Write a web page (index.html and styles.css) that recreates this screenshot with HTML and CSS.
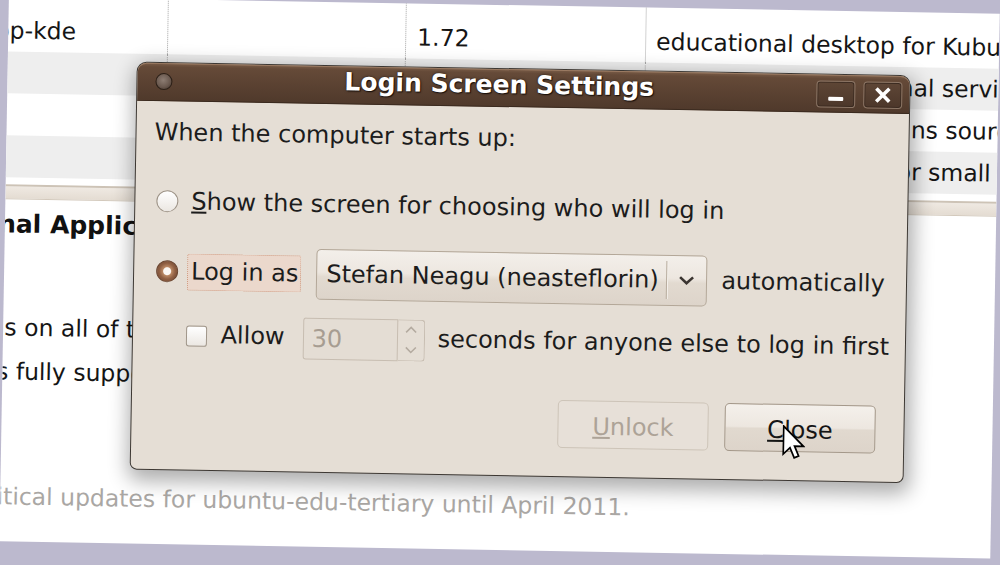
FILE: index.html
```html
<!DOCTYPE html>
<html>
<head>
<meta charset="utf-8">
<title>Login Screen Settings</title>
<link rel="stylesheet" href="styles.css">
</head>
<body>
<div class="stage">
  <div class="page">
    <div class="table">
      <div class="row first">
        <div class="cell c1 cut">edubuntu-desktop-kde</div>
        <div class="cell c2"></div>
        <div class="cell c3">1.72</div>
        <div class="cell c4">educational desktop for Kubuntu</div>
      </div>
      <div class="row alt">
        <div class="cell c1"></div>
        <div class="cell c2"></div>
        <div class="cell c3"></div>
        <div class="cell c4">best tools for additional services</div>
      </div>
      <div class="row">
        <div class="cell c1"></div>
        <div class="cell c2"></div>
        <div class="cell c3"></div>
        <div class="cell c4">a package that contains source code</div>
      </div>
      <div class="row alt">
        <div class="cell c1"></div>
        <div class="cell c2"></div>
        <div class="cell c3"></div>
        <div class="cell c4">Edubuntu desktops for small children</div>
      </div>
    </div>
    <div class="divider"></div>
    <h2 class="heading">Educational Applications</h2>
    <p class="line l1">Applications on all of the supported systems</p>
    <p class="line l2">This package is fully supported by Canonical</p>
    <p class="note">Canonical provides critical updates for ubuntu-edu-tertiary until April 2011.</p>

    <div class="dialog">
      <div class="titlebar">
        <span class="menu-dot"></span>
        <span class="title">Login Screen Settings</span>
        <div class="wm-buttons">
          <span class="wm-btn"><svg width="37" height="25" viewBox="0 0 37 25"><rect x="11" y="15" width="15" height="4" rx="1" fill="#ffffff"/></svg></span>
          <span class="wm-btn"><svg width="37" height="25" viewBox="0 0 37 25"><path d="M12 6 L25 19 M25 6 L12 19" stroke="#ffffff" stroke-width="3.6" fill="none"/></svg></span>
        </div>
      </div>
      <div class="body">
        <div class="prompt">When the computer starts up:</div>
        <div class="opt opt1">
          <span class="radio"></span>
          <span class="lbl show"><u>S</u>how the screen for choosing who will log in</span>
        </div>
        <div class="opt opt2">
          <span class="radio on"></span>
          <span class="focus">Log in as</span>
          <div class="combo">
            <span class="combo-text">Stefan Neagu (neasteflorin)</span>
            <span class="combo-sep"></span>
            <span class="combo-arrow"><svg width="17" height="10" viewBox="0 0 17 10"><path d="M2 2 L8.5 8 L15 2" fill="none" stroke="#3b3531" stroke-width="2.6"/></svg></span>
          </div>
          <span class="lbl auto">automatically</span>
        </div>
        <div class="opt opt3">
          <span class="check"></span>
          <span class="lbl allow">Allow</span>
          <div class="spin">
            <span class="spin-val">30</span>
            <span class="spin-arrows">
              <svg width="14" height="9" viewBox="0 0 14 9"><path d="M2 7 L7 2 L12 7" fill="none" stroke="#b4aba0" stroke-width="1.6"/></svg>
              <svg width="14" height="9" viewBox="0 0 14 9"><path d="M2 2 L7 7 L12 2" fill="none" stroke="#b4aba0" stroke-width="1.6"/></svg>
            </span>
          </div>
          <span class="lbl secs">seconds for anyone else to log in first</span>
        </div>
        <div class="actions">
          <button class="btn dis"><u>U</u>nlock</button>
          <button class="btn"><u>C</u>lose</button>
        </div>
      </div>
      <svg class="cursor" width="23" height="35" viewBox="0 0 13 20"><path d="M0.6 0.6 L0.6 16.6 L4.4 12.9 L6.9 18.7 L9.4 17.6 L7 12 L12.1 12 Z" fill="#ffffff" stroke="#000000" stroke-width="1" stroke-linejoin="miter"/></svg>
    </div>
  </div>
</div>
</body>
</html>
```

FILE: styles.css
```css
html, body {
  margin: 0;
  padding: 0;
  overflow: hidden;
  background: #bcb9ce;
}

.stage {
  width: 1000px;
  height: 565px;
  box-sizing: border-box;
  padding: 5px 0 0 4px;
  transform: rotate(1deg);
  transform-origin: 500px 282px;
  font-family: "DejaVu Sans", "Liberation Sans", sans-serif;
}

.page {
  position: relative;
  width: 991px;
  height: 545px;
  background: #ffffff;
  overflow: hidden;
  color: #151515;
  font-size: 23.5px;
}

/* background table */
.row {
  display: flex;
  height: 42px;
  line-height: 42px;
}
.row.first {
  padding-top: 13px;
  height: 42px;
}
.row.alt {
  background: #eeeeee;
}
.cell {
  box-sizing: border-box;
  white-space: nowrap;
  overflow: hidden;
}
.c1 { width: 159px; }
.c2 { width: 238px; border-left: 1px dotted #a4a4a4; }
.c3 { width: 240px; border-left: 1px dotted #a4a4a4; padding-left: 11px; }
.c4 { flex: 1; border-left: 1px dotted #a4a4a4; padding-left: 10px; }
.row.first .cell { margin-top: -13px; padding-top: 13px; height: 55px; }
.cut { text-indent: -199px; }

.divider {
  margin-top: 7px;
  height: 15px;
  box-sizing: border-box;
  border-top: 2px solid #cdc3b6;
  border-bottom: 1px solid #d3c9bc;
  background: linear-gradient(#efe9e2, #e4dcd2);
}

.heading {
  margin: 10px 0 0;
  font-size: 25px;
  font-weight: bold;
  line-height: 30px;
  white-space: nowrap;
  overflow: hidden;
  text-indent: -129px;
  color: #111111;
}

.line {
  margin: 0;
  line-height: 44px;
  white-space: nowrap;
  overflow: hidden;
}
.l1 { margin-top: 66px; text-indent: -130px; }
.l2 { text-indent: -175px; }

.note {
  margin: 88px 0 0;
  line-height: 30px;
  white-space: nowrap;
  overflow: hidden;
  text-indent: -257px;
  color: #aaa7a4;
}

/* dialog window */
.dialog {
  position: absolute;
  left: 129px;
  top: 63px;
  width: 774px;
  height: 408px;
  box-sizing: border-box;
  border: 1px solid #3d3833;
  border-radius: 10px 10px 7px 7px;
  background: #e5ded5;
  box-shadow: 2px 7px 20px 4px rgba(0, 0, 0, 0.32);
  font-size: 24px;
  color: #1c1c1c;
}

.titlebar {
  height: 38px;
  display: flex;
  align-items: flex-start;
  border-radius: 9px 9px 0 0;
  background: linear-gradient(#7a5d48 0px, #654a38 4px, #5b4232 50%, #4f392b 100%);
  box-shadow: inset 0 1px 0 #9a7a62, inset 0 -1px 0 #3a2a1f;
}

.menu-dot {
  width: 17px;
  height: 17px;
  margin: 10px 0 0 18px;
  box-sizing: border-box;
  border-radius: 50%;
  border: 1px solid #2c2018;
  background: radial-gradient(circle at 45% 40%, #8d7d73 0, #6b5a50 55%, #3e2f26 100%);
}

.title {
  margin: 3px 0 0 172px;
  font-size: 25px;
  font-weight: bold;
  line-height: 25px;
  color: #ffffff;
  white-space: nowrap;
  text-shadow: 1px 1px 1px #1a100a, 0 0 3px rgba(0, 0, 0, 0.6);
}

.wm-buttons {
  margin: 6px 7px 0 auto;
  display: flex;
  gap: 8px;
}
.wm-btn {
  width: 39px;
  height: 27px;
  box-sizing: border-box;
  border: 1px solid #8b7565;
  border-radius: 4px;
  background: linear-gradient(#5e4636, #4c372a);
  box-shadow: inset 0 0 0 1px #3b2b21;
  display: flex;
}

.body {
  padding: 17px 28px 0 18px;
  display: flex;
  flex-direction: column;
  align-items: flex-start;
}

.prompt {
  line-height: 28px;
  white-space: nowrap;
}

.opt {
  display: flex;
  align-items: center;
  white-space: nowrap;
}
.lbl {
  line-height: 28px;
}
.opt1 { margin-top: 41px; height: 28px; }
.opt2 { margin-top: 30.5px; }
.opt3 { margin-top: 18px; }

.radio {
  width: 22px;
  height: 22px;
  box-sizing: border-box;
  margin-left: 3px;
  border-radius: 50%;
  border: 1px solid #9d9387;
  background: linear-gradient(#ffffff, #ebe7e2);
}
.radio.on {
  margin-left: 4px;
  border-color: #6b4631;
  background: radial-gradient(circle, #fbf6f2 0, #fbf6f2 3.5px, #b98763 4.5px, #8e5e42 8px, #6d4530 100%);
}
.show { margin-left: 13px; }

.focus {
  margin-left: 9px;
  height: 37px;
  line-height: 35px;
  box-sizing: border-box;
  padding: 0 2px 0 3px;
  border: 1px dotted #cf9a80;
  border-radius: 2px;
  background: #ebd8cc;
}

.combo {
  width: 391px;
  height: 51px;
  margin-left: 15px;
  box-sizing: border-box;
  border: 1px solid #b3a798;
  border-radius: 5px;
  background: linear-gradient(#f3efea 0%, #ede7e0 45%, #e2dad0 55%, #ddd4ca 100%);
  display: flex;
  align-items: center;
}
.combo-text {
  width: 349px;
  box-sizing: border-box;
  padding-left: 9px;
  line-height: 28px;
}
.combo-sep {
  width: 1px;
  height: 38px;
  background: #b8ad9f;
  box-shadow: 1px 0 0 #f5f1ec;
}
.combo-arrow {
  flex: 1;
  display: flex;
  justify-content: center;
}
.auto { margin-left: 14px; }

.check {
  width: 21px;
  height: 21px;
  box-sizing: border-box;
  margin-left: 35px;
  border: 1px solid #a0968a;
  border-radius: 3px;
  background: linear-gradient(#ffffff, #ebe7e2);
}
.allow { margin-left: 13.5px; margin-bottom: 3px; }

.spin {
  width: 122px;
  height: 42px;
  margin-left: 18px;
  display: flex;
}
.spin-val {
  flex: 1;
  box-sizing: border-box;
  padding-left: 8px;
  line-height: 40px;
  border: 1px solid #c7bdb1;
  border-radius: 3px 0 0 3px;
  background: #e4ddd4;
  color: #a79d92;
}
.spin-arrows {
  width: 27px;
  box-sizing: border-box;
  border: 1px solid #c7bdb1;
  border-left: none;
  border-radius: 0 4px 4px 0;
  display: flex;
  flex-direction: column;
  justify-content: space-around;
  align-items: center;
}
.secs { margin-left: 13px; margin-bottom: 3px; }

.actions {
  align-self: stretch;
  margin-top: 36.5px;
  display: flex;
  justify-content: flex-end;
  gap: 16px;
}
.btn {
  width: 151px;
  height: 48px;
  box-sizing: border-box;
  padding: 4px 0 0;
  font: inherit;
  font-size: 24px;
  color: #151515;
  border: 1px solid #a4988a;
  border-radius: 5px;
  background: linear-gradient(#f4f0eb 0%, #ede7e0 48%, #e1d9cf 52%, #ddd4ca 100%);
}
.btn.dis {
  border-color: #cdc4b8;
  background: #e7e0d8;
  color: #ada397;
}

.cursor {
  position: absolute;
  left: 651px;
  top: 351px;
}
```
